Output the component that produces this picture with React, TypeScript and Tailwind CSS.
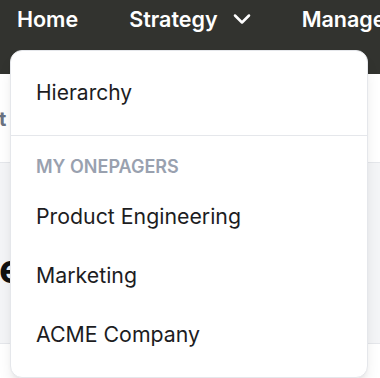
import React from 'react';
import { ChevronDown } from 'lucide-react';

const onepagers: string[] = ['Product Engineering', 'Marketing', 'ACME Company'];

const App: React.FC = () => {
  return (
    <div className="relative w-[380px] h-[378px] overflow-hidden bg-white font-['Inter',sans-serif]">
      {/* top nav */}
      <nav className="h-[74px] bg-[#32332f] flex items-start pl-[17px] pt-[3px] text-white text-[21.5px] font-semibold whitespace-nowrap">
        <span>Home</span>
        <span className="ml-[51px] flex items-center gap-[10px]">
          Strategy
          <ChevronDown size={28} strokeWidth={2.2} />
        </span>
        <span className="ml-[46px]">Management</span>
      </nav>

      {/* page behind the menu */}
      <div className="h-[89px] border-b border-gray-200 flex items-center -ml-[1px] pt-[2px]">
        <span className="text-[20px] font-bold text-gray-500">t</span>
      </div>
      <div className="h-[181px] bg-[#f4f5f7] border-b border-gray-200 flex items-center -ml-[1px] pt-[32px]">
        <span className="text-[40px] font-bold text-[#111] leading-none">e</span>
      </div>

      {/* dropdown */}
      <div className="absolute left-[10px] top-[50px] w-[358px] h-[328px] bg-white rounded-[12px] border border-gray-200 shadow-lg">
        <div className="h-[84px] flex items-center px-[25px] text-[21px] text-[#1d1d1f]">
          Hierarchy
        </div>
        <div className="border-t border-gray-200 pt-[19px]">
          <div className="px-[25px] text-[18px] font-semibold text-gray-400 uppercase leading-[24px]">
            My Onepagers
          </div>
          <div className="mt-[8px]">
            {onepagers.map((name) => (
              <div key={name} className="h-[59px] flex items-center px-[25px] text-[21.3px] text-[#1d1d1f]">
                {name}
              </div>
            ))}
          </div>
        </div>
      </div>
    </div>
  );
};

export default App;
